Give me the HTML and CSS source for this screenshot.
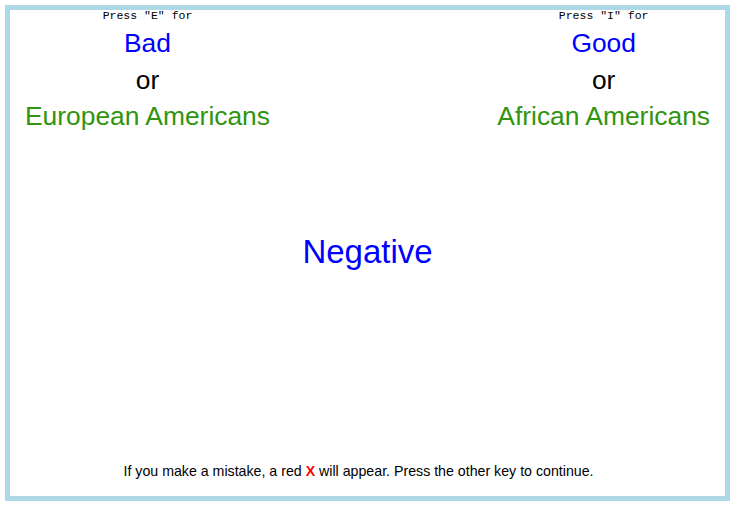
FILE: index.html
```html
<!DOCTYPE html>
<html>
<head>
<meta charset="utf-8">
<link rel="stylesheet" href="styles.css">
</head>
<body>
<div class="canvas">
  <div class="header">
    <div class="side">
      <div class="press">Press "E" for</div>
      <div class="attr">Bad</div>
      <div class="or">or</div>
      <div class="cat">European Americans</div>
    </div>
    <div class="side">
      <div class="press">Press "I" for</div>
      <div class="attr">Good</div>
      <div class="or">or</div>
      <div class="cat">African Americans</div>
    </div>
  </div>
  <div class="stimulus">Negative</div>
  <div class="footer">If you make a mistake, a red <span class="x">X</span> will appear. Press the other key to continue.</div>
</div>
</body>
</html>
```
FILE: styles.css
```css
html, body {
  margin: 0;
  padding: 0;
  background: #ffffff;
}
body {
  padding: 5px 4px 4px 5px;
  font-family: "Liberation Sans", Arial, sans-serif;
}
.canvas {
  box-sizing: border-box;
  width: 725px;
  height: 496px;
  border: 5px solid #ADD8E6;
  display: flex;
  flex-direction: column;
}
.header {
  display: flex;
  justify-content: space-between;
  align-items: flex-start;
}
.side {
  padding: 0 15px;
  text-align: center;
}
.press {
  font-family: "Liberation Mono", "Courier New", monospace;
  font-size: 11.5px;
  line-height: 12px;
  margin-bottom: 3px;
  color: #000;
}
.attr, .or, .cat {
  font-size: 26.4px;
  line-height: 36.6px;
}
.attr { color: #0000FF; }
.or { color: #000; }
.cat { color: #31940F; }
.stimulus {
  margin-top: 98px;
  text-align: center;
  font-size: 33px;
  color: #0000FF;
}
.footer {
  margin-top: auto;
  margin-bottom: 17px;
  padding-right: 18px;
  text-align: center;
  font-size: 14.2px;
  line-height: 16px;
  color: #000;
}
.x {
  color: #FF0000;
  font-weight: bold;
}
```
